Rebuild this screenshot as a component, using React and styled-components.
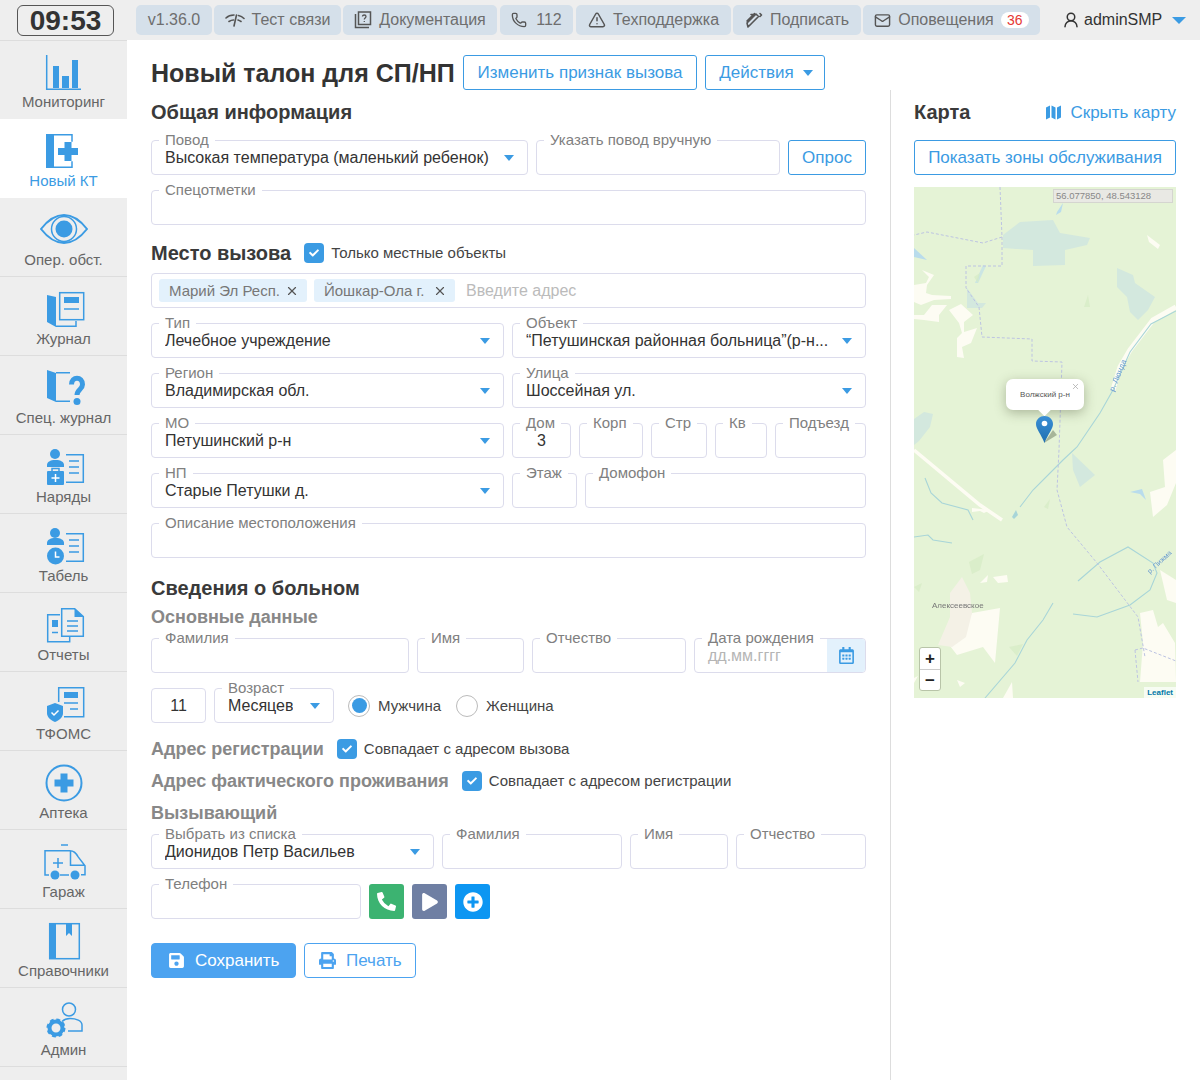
import React from 'react'
import styled, { createGlobalStyle } from 'styled-components'
import { Phone, TriangleAlert, Mail, UserRound, X } from 'lucide-react'
import { FaSave, FaPrint, FaPhoneAlt, FaPlay, FaPlusCircle, FaRegCalendarAlt, FaCheck } from 'react-icons/fa'

const BLUE = '#3b9be3'

const GlobalStyle = createGlobalStyle`
  html, body { margin: 0; padding: 0; background: #fff; }
  body { font-family: "Liberation Sans", Arial, sans-serif; color: #333; overflow: hidden; }
  * { box-sizing: border-box; }
`

const Page = styled.div`
  width: 1200px;
  height: 1080px;
  display: flex;
  flex-direction: column;
`
const TopBar = styled.header`
  height: 40px;
  flex: none;
  background: #eee;
  display: flex;
  align-items: flex-start;
  padding: 5px 0 0 17px;
`
const Clock = styled.div`
  width: 97px;
  height: 31px;
  border: 1px solid #555;
  border-radius: 6px;
  margin-right: 22px;
  font-size: 28px;
  font-weight: 700;
  line-height: 29px;
  text-align: center;
  color: #333;
`
const TopButton = styled.div`
  width: ${({ $w }) => $w}px;
  height: 30px;
  margin-right: ${({ $mr }) => $mr ?? 2}px;
  background: #d5e0ea;
  border-radius: 5px;
  display: flex;
  align-items: center;
  justify-content: center;
  gap: ${({ $gap }) => $gap ?? 7}px;
  font-size: 16px;
  color: #6e6e6e;
  svg { flex: none; color: #555; }
`
const Badge = styled.span`
  width: 28px;
  height: 16px;
  border-radius: 8px;
  background: #fff;
  color: #e53935;
  font-size: 14px;
  line-height: 16px;
  text-align: center;
`
const UserBox = styled.div`
  margin-left: 22px;
  height: 30px;
  display: flex;
  align-items: center;
  font-size: 16px;
  color: #333;
  svg { margin-right: 4px; }
`
const Caret = styled.span`
  flex: none;
  width: 0;
  height: 0;
  border-left: ${({ $big }) => ($big ? 7 : 5.5)}px solid transparent;
  border-right: ${({ $big }) => ($big ? 7 : 5.5)}px solid transparent;
  border-top: ${({ $big }) => ($big ? 7 : 6)}px solid ${BLUE};
  margin-left: ${({ $ml }) => $ml ?? 0}px;
`
const Body = styled.div`
  flex: 1;
  display: flex;
  min-height: 0;
`
const Sidebar = styled.nav`
  width: 127px;
  flex: none;
  background: #eee;
`
const NavItem = styled.div`
  height: 79px;
  padding-top: ${({ $first }) => ($first ? 11 : 12)}px;
  background: ${({ $active }) => ($active ? '#fff' : '#eee')};
  border-bottom: 1px solid ${({ $active, $first }) => ($active || $first ? 'transparent' : '#ddd')};
  border-top: ${({ $first }) => ($first ? '1px solid #ddd' : 'none')};
  display: flex;
  flex-direction: column;
  align-items: center;
  color: ${({ $active }) => ($active ? BLUE : '#666')};
  font-size: 15px;
  line-height: 18px;
  svg { display: block; flex: none; margin-bottom: 1px; }
`
const Main = styled.main`
  flex: 1;
  min-width: 0;
  padding: 15px 24px 0;
  display: flex;
  flex-direction: column;
`
const TitleRow = styled.div`
  display: flex;
  align-items: center;
  height: 35px;
  flex: none;
  gap: 8px;
`
const Title = styled.h1`
  margin: 2px 0 0;
  width: 304px;
  font-size: 25px;
  font-weight: 700;
  color: #333;
  white-space: nowrap;
`
const OutlineButton = styled.div`
  width: ${({ $w }) => ($w ? `${$w}px` : 'auto')};
  height: 35px;
  flex: none;
  border: 1px solid ${BLUE};
  border-radius: 3px;
  padding-left: ${({ $pl }) => $pl ?? 0}px;
  padding-top: ${({ $pt }) => $pt ?? 0}px;
  display: flex;
  align-items: center;
  justify-content: center;
  color: ${BLUE};
  font-size: 17px;
  background: #fff;
`
const Columns = styled.div`
  flex: 1;
  display: flex;
  min-height: 0;
`
const LeftColumn = styled.section`
  width: 740px;
  flex: none;
  padding: 10px 24px 0 0;
  border-right: 1px solid #ddd;
`
const RightColumn = styled.aside`
  flex: 1;
  padding: 10px 0 0 23px;
`
const Heading = styled.h2`
  margin: ${({ $mt }) => $mt ?? 0}px 0 0;
  font-size: 20px;
  line-height: 24px;
  font-weight: 700;
  color: #3a3a3a;
`
const SubHeading = styled.h3`
  margin: ${({ $mt }) => $mt ?? 0}px 0 0;
  font-size: 18px;
  line-height: 22px;
  font-weight: 700;
  color: #888;
`
const Row = styled.div`
  display: flex;
  align-items: center;
  gap: ${({ $gap }) => $gap ?? 8}px;
  margin-top: ${({ $mt }) => $mt ?? 15}px;
`
const FieldBox = styled.div`
  position: relative;
  width: ${({ $w }) => ($w ? `${$w}px` : 'auto')};
  flex: ${({ $w }) => ($w ? 'none' : 1)};
  min-width: 0;
  height: 35px;
  border: 1px solid #dcdcec;
  border-radius: 4px;
  padding: 0 13px;
  display: flex;
  align-items: center;
  justify-content: ${({ $center }) => ($center ? 'center' : 'space-between')};
  background: #fff;
`
const FieldLabel = styled.span`
  position: absolute;
  top: -10px;
  left: 7px;
  padding: 0 6px;
  background: #fff;
  font-size: 15px;
  line-height: 17px;
  color: #808080;
  white-space: nowrap;
`
const Value = styled.span`
  font-size: 16px;
  color: #333;
  white-space: nowrap;
  overflow: hidden;
`
const DateHint = styled.span`
  font-size: 16px;
  color: #b5b5b5;
`
const CalendarTile = styled.div`
  position: absolute;
  top: 0;
  right: 0;
  bottom: 0;
  width: 38px;
  background: #e3f1fc;
  border-radius: 0 3px 3px 0;
  display: flex;
  align-items: center;
  justify-content: center;
  color: ${BLUE};
`
const CheckBox = styled.span`
  width: 20px;
  height: 20px;
  flex: none;
  border-radius: 4px;
  background: ${BLUE};
  color: #fff;
  display: flex;
  align-items: center;
  justify-content: center;
  margin: 0 7px 0 13px;
`
const CheckText = styled.span`
  margin-bottom: 2px;
  font-size: 15px;
  color: #444;
`
const InlineRow = styled.div`
  display: flex;
  align-items: center;
  height: ${({ $h }) => $h ?? 22}px;
  margin-top: ${({ $mt }) => $mt ?? 0}px;
`
const AddressBox = styled.div`
  height: 35px;
  margin-top: 8px;
  border: 1px solid #dcdcec;
  border-radius: 4px;
  padding: 0 7px;
  display: flex;
  align-items: center;
  gap: 7px;
`
const Chip = styled.span`
  height: 23px;
  width: ${({ $w }) => $w}px;
  padding: 0 8px 0 10px;
  background: #e3f1fc;
  border-radius: 3px;
  display: flex;
  align-items: center;
  justify-content: space-between;
  font-size: 15px;
  color: #777;
  svg { color: #555; }
`
const Placeholder = styled.span`
  margin-left: 4px;
  font-size: 16px;
  color: #bbb;
`
const Radio = styled.span`
  width: 22px;
  height: 22px;
  flex: none;
  border-radius: 50%;
  border: 1px solid #bbb;
  background: #fff;
  display: flex;
  align-items: center;
  justify-content: center;
  margin-left: ${({ $ml }) => $ml ?? 0}px;
  &::after {
    content: '';
    width: 15px;
    height: 15px;
    border-radius: 50%;
    background: ${({ $on }) => ($on ? BLUE : 'transparent')};
  }
`
const RadioText = styled.span`
  font-size: 15px;
  color: #444;
`
const IconButton = styled.div`
  width: 35px;
  height: 35px;
  flex: none;
  border-radius: 3px;
  background: ${({ $bg }) => $bg};
  color: #fff;
  display: flex;
  align-items: center;
  justify-content: center;
`
const ActionButton = styled.div`
  width: ${({ $w }) => $w}px;
  height: 35px;
  flex: none;
  border-radius: 4px;
  border: 1px solid #4ca3f0;
  background: ${({ $filled }) => ($filled ? '#4ca3f0' : '#fff')};
  color: ${({ $filled }) => ($filled ? '#fff' : '#4ca3f0')};
  padding-left: ${({ $pl }) => $pl}px;
  display: flex;
  align-items: center;
  gap: 10px;
  font-size: 17px;
`
const MapHeader = styled.div`
  display: flex;
  justify-content: space-between;
  align-items: center;
  height: 24px;
`
const HideLink = styled.span`
  display: flex;
  align-items: center;
  gap: 9px;
  padding-top: 1px;
  color: ${BLUE};
  font-size: 17px;
`
const ZonesButton = styled(OutlineButton)`
  margin-top: 16px;
`
const MapFrame = styled.div`
  position: relative;
  margin-top: 12px;
  width: 262px;
  height: 511px;
  background: #e5f3d6;
  overflow: hidden;
`
const MapArt = styled.svg`
  display: block;
  filter: blur(0.6px);
`
const CoordBox = styled.div`
  position: absolute;
  top: 2px;
  right: 3px;
  width: 120px;
  height: 14px;
  padding-left: 2px;
  background: #e9e9e4;
  border: 1px solid #d5d5d0;
  color: #888;
  font-size: 9.5px;
  line-height: 12px;
`
const Popup = styled.div`
  position: absolute;
  left: 92px;
  top: 192px;
  width: 78px;
  height: 31px;
  border-radius: 7px;
  background: #fff;
  box-shadow: 0 3px 12px rgba(60, 70, 40, 0.35);
  display: flex;
  align-items: center;
  justify-content: center;
  font-size: 8px;
  color: #555;
  &::after {
    content: '';
    position: absolute;
    left: 33px;
    bottom: -4px;
    width: 11px;
    height: 11px;
    background: #fff;
    transform: rotate(45deg);
  }
`
const PopupClose = styled.span`
  position: absolute;
  top: 3px;
  right: 4px;
  color: #aaa;
  display: flex;
`
const Pin = styled.svg`
  position: absolute;
  left: 121px;
  top: 228px;
`
const ZoomControl = styled.div`
  position: absolute;
  left: 5px;
  bottom: 7px;
  width: 22px;
  border: 1px solid #b8c4a8;
  border-radius: 3px;
  background: #fff;
`
const ZoomKey = styled.div`
  height: 21px;
  display: flex;
  align-items: center;
  justify-content: center;
  font-size: 17px;
  font-weight: 700;
  line-height: 1;
  color: #222;
  & + & { border-top: 1px solid #ccc; }
`
const Attribution = styled.div`
  position: absolute;
  right: 0;
  bottom: 0;
  padding: 1px 3px;
  background: rgba(255, 255, 255, 0.7);
  color: #0078a8;
  font-size: 8px;
  font-weight: 700;
`

const icons = {
  monitor: (
    <>
      <path d="M6.700 3v35M6 37.300h35" stroke={BLUE} strokeWidth="1.500" fill="none" />
      <path d="M13 14h6v22h-6zM22 24h7v12h-7zM32 8h6v28h-6z" fill={BLUE} />
    </>
  ),
  newCall: (
    <>
      <path d="M6 3h8v34H6z" fill={BLUE} />
      <path d="M13 3.700h19v7M13 36.300h19v-6" stroke={BLUE} strokeWidth="1.500" fill="none" />
      <path d="M24.500 11h7v6h6.500v7h-6.500v6h-7v-6H18v-7h6.500z" fill={BLUE} />
    </>
  ),
  eye: (
    <>
      <path d="M1 19C8 10 15 5 24 5s16 5 23 14c-7 9-14 14-23 14S8 28 1 19Z" stroke={BLUE} strokeWidth="2" fill="none" />
      <circle cx="24" cy="19" r="12.500" stroke={BLUE} strokeWidth="1.500" fill="none" />
      <circle cx="24" cy="19" r="8.500" fill={BLUE} />
    </>
  ),
  journal: (
    <>
      <path d="M7 6l9 2v30l-9-5z" fill={BLUE} />
      <path d="M16 37.300h20V32" stroke={BLUE} strokeWidth="1.500" fill="none" />
      <rect x="19.700" y="3.700" width="24" height="27" stroke={BLUE} strokeWidth="1.500" fill="none" />
      <path d="M24 8h15v6H24z" fill={BLUE} />
      <path d="M24 20h15" stroke={BLUE} strokeWidth="1.500" />
    </>
  ),
  special: (
    <>
      <path d="M7 2l9 3v29l-9-4z" fill={BLUE} />
      <path d="M16 4.700h14M16 33.300h14" stroke={BLUE} strokeWidth="1.500" fill="none" />
      <path d="M31.500 16.500c0-8.500 11-8.500 11 0 0 5-5.500 5-5.500 10.500" stroke={BLUE} strokeWidth="5" fill="none" />
      <circle cx="37" cy="33.500" r="3.500" fill={BLUE} />
    </>
  ),
  duty: (
    <>
      <circle cx="15" cy="7" r="5" fill={BLUE} />
      <path d="M7 20v-2c0-3 3-5 8.500-5s8.500 2 8.500 5v2z" fill={BLUE} />
      <rect x="7" y="24" width="17" height="14" rx="1" fill={BLUE} />
      <path d="M12 24v-2.500h7V24" stroke={BLUE} strokeWidth="1.500" fill="none" />
      <path d="M15.500 27v8M11.500 31h8" stroke="#fff" strokeWidth="1.500" />
      <path d="M26 7.700h17.300v27.600H26M29 14h10M29 20h10M29 26h10" stroke={BLUE} strokeWidth="1.500" fill="none" />
    </>
  ),
  timesheet: (
    <>
      <circle cx="15" cy="7" r="5" fill={BLUE} />
      <path d="M7 19v-2c0-3 3-5 8.500-5s8.500 2 8.500 5v2z" fill={BLUE} />
      <circle cx="15.500" cy="30" r="8.500" fill={BLUE} />
      <path d="M15.500 25.500V31h4" stroke="#fff" strokeWidth="1.500" fill="none" />
      <path d="M26 7.700h17.300v27.600H26M29 14h10M29 20h10M29 26h10" stroke={BLUE} strokeWidth="1.500" fill="none" />
    </>
  ),
  reports: (
    <>
      <path d="M20 9.700H7.700v27h22v-5" stroke={BLUE} strokeWidth="1.500" fill="none" />
      <path d="M12 15h6v7h-6z" fill={BLUE} />
      <path d="M12 27.500h6" stroke={BLUE} strokeWidth="1.500" />
      <path d="M21.700 3.700h13l8.600 8v19.600H21.700z" stroke={BLUE} strokeWidth="1.500" fill="none" />
      <path d="M34.500 3.500l9 8.500h-9z" fill={BLUE} />
      <path d="M27 16h11M27 21h11M27 26h11" stroke={BLUE} strokeWidth="1.500" />
    </>
  ),
  tfoms: (
    <>
      <path d="M18.700 18V3.700h25v29H24" stroke={BLUE} strokeWidth="1.500" fill="none" />
      <path d="M24 8h14v6H24z" fill={BLUE} />
      <path d="M24 19h14M30 25h8" stroke={BLUE} strokeWidth="1.500" />
      <path d="M15 19l8 3v7c0 4-3 7-8 9-5-2-8-5-8-9v-7z" fill={BLUE} />
      <path d="M11.500 28.500l2.500 2.500 4.500-4.500" stroke="#fff" strokeWidth="1.500" fill="none" />
    </>
  ),
  pharmacy: (
    <>
      <circle cx="24" cy="20" r="17.500" stroke={BLUE} strokeWidth="2" fill="none" />
      <path d="M20.500 10.500h7v6h6v7h-6v6h-7v-6h-6v-7h6z" fill={BLUE} />
    </>
  ),
  garage: (
    <>
      <path d="M21 3h7" stroke={BLUE} strokeWidth="1.500" />
      <path d="M9 33H5V8.700h25c4 0 6 2 8 6l7 9v9h-4M20 33h9M30.500 8.700V23.300H45" stroke={BLUE} strokeWidth="1.500" fill="none" />
      <path d="M18 16v10M13 21h10" stroke={BLUE} strokeWidth="1.500" />
      <circle cx="15" cy="33" r="4.500" fill={BLUE} />
      <circle cx="35" cy="33" r="4.500" fill={BLUE} />
    </>
  ),
  books: (
    <>
      <rect x="9.700" y="2.700" width="29.600" height="35" stroke={BLUE} strokeWidth="1.500" fill="none" />
      <path d="M9 2h7v36H9zM26 2h6v13l-3-3-3 3z" fill={BLUE} />
    </>
  ),
  admin: (
    <>
      <circle cx="29" cy="9.500" r="6.500" stroke={BLUE} strokeWidth="1.500" fill="none" />
      <path d="M22 21.500c2-2 5-3 8-3 6 0 12 2 12 6.500v6H28" stroke={BLUE} strokeWidth="1.500" fill="none" />
      <circle cx="16" cy="28" r="7.500" stroke={BLUE} strokeWidth="4" strokeDasharray="3.500 2.400" fill="none" />
      <circle cx="16" cy="28" r="6.500" stroke={BLUE} strokeWidth="4" fill="none" />
    </>
  ),
}

const navItems = [
  { key: 'monitor', label: 'Мониторинг', first: true },
  { key: 'newCall', label: 'Новый КТ', active: true },
  { key: 'eye', label: 'Опер. обст.' },
  { key: 'journal', label: 'Журнал' },
  { key: 'special', label: 'Спец. журнал' },
  { key: 'duty', label: 'Наряды' },
  { key: 'timesheet', label: 'Табель' },
  { key: 'reports', label: 'Отчеты' },
  { key: 'tfoms', label: 'ТФОМС' },
  { key: 'pharmacy', label: 'Аптека' },
  { key: 'garage', label: 'Гараж' },
  { key: 'books', label: 'Справочники' },
  { key: 'admin', label: 'Админ' },
]

const SignalIcon = () => (
  <svg width="20" height="16" viewBox="0 0 20 16" fill="none" stroke="currentColor" strokeWidth="1.600" strokeLinecap="round">
    <path d="M1 6c2-2 5-3 8-3M4 9.500c1.500-1 3-1.500 4.500-1.500M11.500 3l-2.500 11M13.500 3.500c2 .5 4 1.500 5.500 3M13 8c1 .3 2 .8 3 1.500" />
  </svg>
)
const DocsIcon = () => (
  <svg width="18" height="18" viewBox="0 0 18 18" fill="none" stroke="currentColor" strokeWidth="1.500">
    <path d="M1.500 3v13.500H15M4.500 1h12v12.500h-12z" />
    <path d="M8.500 5.500c0-2 3.500-2 3.500 0 0 1.500-1.700 1.500-1.700 3M10.300 10v1" strokeWidth="1.300" />
  </svg>
)
const SignIcon = () => (
  <svg width="18" height="18" viewBox="0 0 18 18" fill="none" stroke="currentColor" strokeWidth="1.600" strokeLinecap="round" strokeLinejoin="round">
    <path d="M2 10L9.500 2.500M6 3.500h4M3 16l10.500-10.500-2.500-2.500L2 12M15 2.500l1.500 1.500-1.500 1.500M2 12l1 4" />
  </svg>
)
const FoldedMapIcon = () => (
  <svg width="15" height="15" viewBox="0 0 15 15" fill={BLUE}>
    <path d="M0 2.500L4 .5v12l-4 2zM5.500.5l4 2v12l-4-2zM11 2.500l4-2v12l-4 2z" />
  </svg>
)

const Field = ({ label, value, w, select, center, children }) => (
  <FieldBox $w={w} $center={center}>
    <FieldLabel>{label}</FieldLabel>
    {value && <Value>{value}</Value>}
    {select && <Caret $ml={8} />}
    {children}
  </FieldBox>
)

const Check = () => (
  <CheckBox>
    <FaCheck size={10} />
  </CheckBox>
)

const MapDrawing = () => (
  <MapArt width="262" height="511" viewBox="0 0 262 511">
    <g fill="#d3e8de">
      <path d="M89 48L106 35L139 33L146 46L176 51L173 58L151 63L151 78L119 79L119 63L89 61Z" />
      <path d="M203 81L219 88L221 96L241 110L234 123L224 133L216 125L213 110L203 100Z" />
      <path d="M53 101L64 116L72 116L68 121L53 121Z" />
      <path d="M0 232L10 225L19 227L16 240L5 254L0 258Z" />
      <path d="M158 266L181 288L166 300L159 283Z" />
    </g>
    <g fill="#b9dcec">
      <path d="M0 61L13 73L0 70ZM143 25L149 16L147 25L142 28ZM216 305L228 302L232 313L226 307Z" />
      <path d="M61 96L69 78L72 79L64 96Z" opacity=".6" />
    </g>
    <g fill="#fdfcf3">
      <path d="M8 83L20 88L13 98L12 106L18 108L37 109L37 112L20 113L7 118L0 115L0 98L12 96L15 90Z" />
      <path d="M18 118L33 118L25 128L25 135L10 133L0 132L0 128L10 128Z" />
      <path d="M35 123L47 117L59 128L50 135L50 145L63 141L57 156L48 160L50 171L43 170L43 151L48 146L45 136Z" />
      <path d="M233 48L246 58L244 62L235 55Z" />
      <path d="M249 273L262 263L262 296L253 318L239 330L236 305L251 300Z" />
      <path d="M246 383L262 393L262 416L253 413Z" />
      <path d="M226 426L239 423L244 440L249 436L261 456L262 495L226 495L229 456Z" />
      <path d="M66 396L74 388L73 395ZM79 390L93 388L94 395L84 396ZM89 511L98 495L99 511ZM43 493L51 496L46 500ZM0 496L4 489L0 491Z" />
      <path d="M58 321L76 323L70 326L66 324L58 325Z" />
      <path d="M58 426L86 421L81 476L69 460L43 468L33 455L48 445Z" />
    </g>
    <path d="M24 458L36 430L36 406L48 390L56 406L58 426L52 450L38 460Z" fill="#f4f1e6" />
    <g fill="none" stroke="#fdfcf3">
      <path d="M262 120L239 133L216 163L206 180L199 203" strokeWidth="5" />
      <path d="M0 263L66 318L88 333" strokeWidth="3.500" />
    </g>
    <g fill="none" stroke="#a8d5d8" strokeWidth="1.100">
      <path d="M262 124L237 137L216 165L199 203L186 226L163 260L149 273L119 303L106 320" />
      <path d="M11 291L17 306L28 316L54 323L59 333M0 350L14 348L19 353L38 356" />
      <path d="M164 394L186 375L214 360L239 376L243 386L236 403L216 418L183 430L159 427" />
      <path d="M139 416L129 433L113 453L101 476L71 511" />
    </g>
    <path d="M98 330L102 323L104 328L100 332Z" fill="#a8d5d8" />
    <g fill="none" stroke="#bcc3e2" strokeWidth="1" strokeDasharray="3 2">
      <path d="M86 0L88 50L69 56L13 45L0 48M88 50L88 79L52 79L52 101L65 120L68 150L118 152L118 174L148 175L145 263L143 303L153 340L183 376L224 430L231 470" />
      <path d="M221 463L229 461L262 474M221 463L224 495" />
    </g>
    <g fill="#d5ebc4" opacity=".7">
      <path d="M60 90L66 86L64 96ZM170 120L174 108L176 120ZM55 375L70 367L66 383L58 387ZM95 460L109 457L103 469ZM0 400L8 396L5 405ZM130 320L136 312L134 322Z" />
    </g>
    <text x="18" y="421" fontSize="8" fill="#777" fontFamily="Liberation Sans, sans-serif">Алексеевское</text>
    <text fontSize="8" fill="#6a9bd0" fontFamily="Liberation Sans, sans-serif" transform="translate(200 205) rotate(-68)">р. Люнда</text>
    <text fontSize="7" fill="#6a9bd0" fontFamily="Liberation Sans, sans-serif" transform="translate(236 387) rotate(-43)">р. Пижма</text>
  </MapArt>
)

export default function App() {
  return (
    <Page>
      <GlobalStyle />
      <TopBar>
        <Clock>09:53</Clock>
        <TopButton $w={76}>v1.36.0</TopButton>
        <TopButton $w={127}><SignalIcon />Тест связи</TopButton>
        <TopButton $w={154} $mr={3}><DocsIcon />Документация</TopButton>
        <TopButton $w={73} $mr={3} $gap={9}><Phone size={16} />112</TopButton>
        <TopButton $w={155}><TriangleAlert size={18} />Техподдержка</TopButton>
        <TopButton $w={128}><SignIcon />Подписать</TopButton>
        <TopButton $w={177} $mr={0}><Mail size={17} />Оповещения<Badge>36</Badge></TopButton>
        <UserBox>
          <UserRound size={18} color="#333" />
          adminSMP
          <Caret $big $ml={10} />
        </UserBox>
      </TopBar>
      <Body>
        <Sidebar>
          {navItems.map(({ key, label, first, active }) => (
            <NavItem key={key} $first={first} $active={active}>
              <svg width="48" height="40" viewBox="0 0 48 40">{icons[key]}</svg>
              {label}
            </NavItem>
          ))}
        </Sidebar>
        <Main>
          <TitleRow>
            <Title>Новый талон для СП/НП</Title>
            <OutlineButton $w={234} $pt={1}>Изменить признак вызова</OutlineButton>
            <OutlineButton $w={120} $pl={2} $pt={1}>Действия<Caret $ml={9} /></OutlineButton>
          </TitleRow>
          <Columns>
            <LeftColumn>
              <Heading>Общая информация</Heading>
              <Row $mt={16}>
                <Field w={377} label="Повод" value="Высокая температура (маленький ребенок)" select />
                <Field w={244} label="Указать повод вручную" />
                <OutlineButton $w={78}>Опрос</OutlineButton>
              </Row>
              <Row><Field label="Спецотметки" /></Row>

              <InlineRow $h={24} $mt={16}>
                <Heading>Место вызова</Heading>
                <Check />
                <CheckText>Только местные объекты</CheckText>
              </InlineRow>
              <AddressBox>
                <Chip $w={148}>Марий Эл Респ.<X size={14} /></Chip>
                <Chip $w={141}>Йошкар-Ола г.<X size={14} /></Chip>
                <Placeholder>Введите адрес</Placeholder>
              </AddressBox>
              <Row>
                <Field w={353} label="Тип" value="Лечебное учреждение" select />
                <Field label="Объект" value="“Петушинская районная больница”(р-н..." select />
              </Row>
              <Row>
                <Field w={353} label="Регион" value="Владимирская обл." select />
                <Field label="Улица" value="Шоссейная ул." select />
              </Row>
              <Row>
                <Field w={353} label="МО" value="Петушинский р-н" select />
                <Field w={59} label="Дом" value="3" center />
                <Field w={64} label="Корп" />
                <Field w={56} label="Стр" />
                <Field w={52} label="Кв" />
                <Field label="Подъезд" />
              </Row>
              <Row>
                <Field w={353} label="НП" value="Старые Петушки д." select />
                <Field w={65} label="Этаж" />
                <Field label="Домофон" />
              </Row>
              <Row><Field label="Описание местоположения" /></Row>

              <Heading $mt={18}>Сведения о больном</Heading>
              <SubHeading $mt={6}>Основные данные</SubHeading>
              <Row $mt={10}>
                <Field w={258} label="Фамилия" />
                <Field w={107} label="Имя" />
                <Field w={154} label="Отчество" />
                <Field label="Дата рождения">
                  <DateHint>дд.мм.гггг</DateHint>
                  <CalendarTile><FaRegCalendarAlt size={17} /></CalendarTile>
                </Field>
              </Row>
              <Row>
                <FieldBox $w={55} $center><Value>11</Value></FieldBox>
                <Field w={120} label="Возраст" value="Месяцев" select />
                <Radio $on $ml={6} />
                <RadioText>Мужчина</RadioText>
                <Radio $ml={7} />
                <RadioText>Женщина</RadioText>
              </Row>
              <InlineRow $mt={15}>
                <SubHeading>Адрес регистрации</SubHeading>
                <Check />
                <CheckText>Совпадает с адресом вызова</CheckText>
              </InlineRow>
              <InlineRow $mt={10}>
                <SubHeading>Адрес фактического проживания</SubHeading>
                <Check />
                <CheckText>Совпадает с адресом регистрации</CheckText>
              </InlineRow>
              <SubHeading $mt={10}>Вызывающий</SubHeading>
              <Row $mt={10}>
                <Field w={283} label="Выбрать из списка" value="Дионидов Петр Васильев" select />
                <Field w={180} label="Фамилия" />
                <Field w={98} label="Имя" />
                <Field label="Отчество" />
              </Row>
              <Row>
                <Field w={210} label="Телефон" />
                <IconButton $bg="#3cb371"><FaPhoneAlt size={19} /></IconButton>
                <IconButton $bg="#6f7fa3"><FaPlay size={18} /></IconButton>
                <IconButton $bg="#0d96f2"><FaPlusCircle size={20} /></IconButton>
              </Row>
              <Row $mt={24}>
                <ActionButton $w={145} $pl={16} $filled><FaSave size={17} />Сохранить</ActionButton>
                <ActionButton $w={112} $pl={14}><FaPrint size={17} />Печать</ActionButton>
              </Row>
            </LeftColumn>
            <RightColumn>
              <MapHeader>
                <Heading>Карта</Heading>
                <HideLink><FoldedMapIcon />Скрыть карту</HideLink>
              </MapHeader>
              <ZonesButton>Показать зоны обслуживания</ZonesButton>
              <MapFrame>
                <MapDrawing />
                <CoordBox>56.077850, 48.543128</CoordBox>
                <Popup>
                  Волжский р-н
                  <PopupClose><X size={9} /></PopupClose>
                </Popup>
                <Pin width="26" height="30" viewBox="0 0 26 30">
                  <defs>
                    <linearGradient id="pinFill" x1="0" y1="0" x2="0" y2="1">
                      <stop offset="0" stopColor="#3a8fd6" />
                      <stop offset="1" stopColor="#1f6fb0" />
                    </linearGradient>
                  </defs>
                  <path d="M9 28l13-8-4-5z" fill="#5a6a50" opacity=".45" />
                  <path d="M9.500 1C5 1 1 4.500 1 9c0 5 5 10 8.500 19C13 19 18 14 18 9c0-4.500-4-8-8.500-8z" fill="url(#pinFill)" />
                  <circle cx="9.500" cy="8.500" r="2.800" fill="#fff" />
                </Pin>
                <ZoomControl>
                  <ZoomKey>+</ZoomKey>
                  <ZoomKey>−</ZoomKey>
                </ZoomControl>
                <Attribution>Leaflet</Attribution>
              </MapFrame>
            </RightColumn>
          </Columns>
        </Main>
      </Body>
    </Page>
  )
}
